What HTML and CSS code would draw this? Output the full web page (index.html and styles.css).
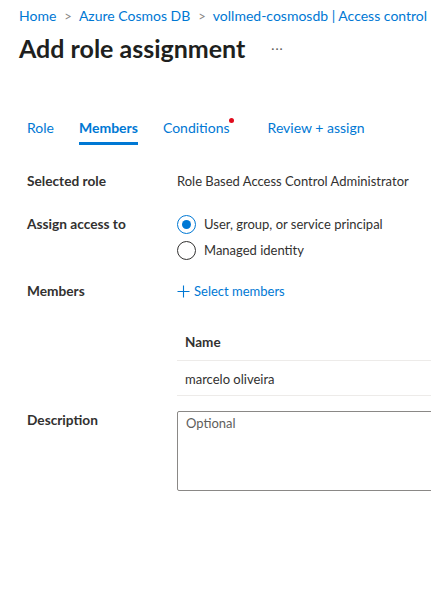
FILE: index.html
```html
<!DOCTYPE html>
<html>
<head>
<meta charset="utf-8">
<link rel="stylesheet" href="styles.css">
</head>
<body>
<div class="page">
  <nav class="crumbs">
    <a>Home</a><span class="sep">&gt;</span><a>Azure Cosmos DB</a><span class="sep">&gt;</span><a>vollmed-cosmosdb | Access control</a>
  </nav>
  <div class="titlebar">
    <h1>Add role assignment</h1>
    <span class="more">···</span>
  </div>
  <div class="tabs">
    <span class="tab">Role</span>
    <span class="tab active">Members</span>
    <span class="tab dotted">Conditions<span class="dot"></span></span>
    <span class="tab">Review + assign</span>
  </div>
  <div class="form">
    <div class="row r-role">
      <div class="label">Selected role</div>
      <div class="value">Role Based Access Control Administrator</div>
    </div>
    <div class="row r-assign">
      <div class="label">Assign access to</div>
      <div class="value radios">
        <label class="radio"><span class="circle checked"></span>User, group, or service principal</label>
        <label class="radio"><span class="circle"></span>Managed identity</label>
      </div>
    </div>
    <div class="row r-members">
      <div class="label">Members</div>
      <div class="value"><a class="add"><svg width="13" height="13" viewBox="0 0 13 13"><path d="M6.5 0.5v12M0.5 6.5h12" stroke="#0078d4" stroke-width="1.1" fill="none"/></svg>Select members</a></div>
    </div>
    <div class="row r-table">
      <div class="label"></div>
      <div class="value table">
        <div class="th">Name</div>
        <div class="td">marcelo oliveira</div>
      </div>
    </div>
    <div class="row r-desc">
      <div class="label">Description</div>
      <div class="value"><div class="textarea">Optional</div></div>
    </div>
  </div>
</div>
</body>
</html>
```
FILE: styles.css
```css
html, body {
  margin: 0;
  padding: 0;
  background: #fff;
  overflow: hidden;
}
body {
  font-family: "Segoe UI", Lato, "Open Sans", sans-serif;
  font-size: 14px;
  color: #323130;
}
.page {
  width: 431px;
  height: 592px;
  overflow: hidden;
}
.crumbs {
  padding: 6px 0 0 19px;
  height: 20px;
  line-height: 20px;
  white-space: nowrap;
  color: #0078d4;
}
.crumbs .sep {
  color: #8a8886;
  margin: 0 7px 0 8px;
  font-size: 13px;
}
.titlebar {
  display: flex;
  align-items: center;
  padding-left: 19px;
  height: 44px;
}
.titlebar h1 {
  margin: 0;
  font-size: 25px;
  font-weight: 700;
  color: #201f1e;
}
.more {
  margin-left: 26px;
  color: #605e5c;
  font-size: 12px;
  letter-spacing: 1px;
}
.tabs {
  display: flex;
  padding: 0 0 0 27px;
  margin-top: 44px;
  height: 31px;
  gap: 25px;
}
.tab {
  color: #0078d4;
  line-height: 28px;
  height: 31px;
  box-sizing: border-box;
  position: relative;
}
.tab.active {
  font-weight: 700;
  border-bottom: 3px solid #0078d4;
}
.tab.dotted {
  margin-right: 13px;
}
.dot {
  position: absolute;
  right: -4px;
  top: 4px;
  width: 5px;
  height: 5px;
  border-radius: 50%;
  background: #e00b1c;
}
.form {
  padding: 24px 0 0 27px;
}
.row {
  display: flex;
}
.label {
  width: 150px;
  flex: none;
  font-weight: 700;
  line-height: 24px;
  font-size: 13.7px;
}
.value {
  flex: 1;
  line-height: 24px;
  white-space: nowrap;
  font-size: 13px;
}
.r-assign { margin-top: 19px; }
.radios {
  display: flex;
  flex-direction: column;
  gap: 2px;
}
.radio {
  display: flex;
  align-items: center;
  gap: 8px;
  height: 24px;
}
.circle {
  width: 17px;
  height: 17px;
  border: 1px solid #323130;
  border-radius: 50%;
  box-sizing: content-box;
  position: relative;
  flex: none;
}
.circle.checked {
  border-color: #0078d4;
}
.circle.checked::after {
  content: "";
  position: absolute;
  left: 4px;
  top: 4px;
  width: 9px;
  height: 9px;
  border-radius: 50%;
  background: #0078d4;
}
.r-members { margin-top: 17px; }
.add {
  color: #0078d4;
  display: inline-flex;
  align-items: center;
  gap: 4px;
}
.r-table { margin-top: 19px; }
.table {
  display: flex;
  flex-direction: column;
}
.th {
  font-weight: 700;
  font-size: 13.5px;
  padding: 6px 8px 0;
  height: 30px;
  border-bottom: 1px solid #edebe9;
}
.td {
  padding: 6px 8px 0;
  height: 28px;
  border-bottom: 1px solid #edebe9;
}
.r-desc { margin-top: 15px; }
.r-desc .label { margin-top: -3px; }
.textarea {
  box-sizing: border-box;
  height: 80px;
  width: 280px;
  border: 1px solid #8a8886;
  border-radius: 2px;
  padding: 0 8px;
  color: #605e5c;
  line-height: 22px;
}
```
